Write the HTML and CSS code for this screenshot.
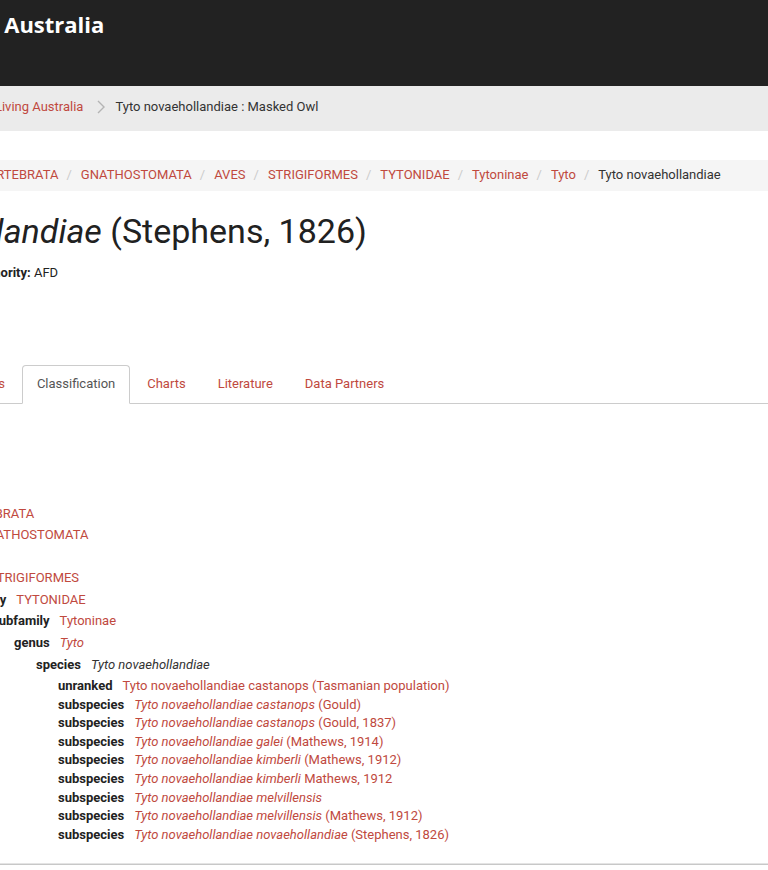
FILE: index.html
```html
<!DOCTYPE html>
<html lang="en">
<head>
<meta charset="utf-8">
<title>Tyto novaehollandiae : Masked Owl</title>
<link rel="stylesheet" href="styles.css">
</head>
<body>
<header class="site-header">
  <div class="brand">Atlas of Living Australia</div>
</header>
<nav class="crumb-bar">
  <ol class="crumbs">
    <li><a href="#">Atlas of Living Australia</a></li>
    <li class="chev" aria-hidden="true"><svg width="8" height="14" viewBox="0 0 8 14"><polyline points="1,1 7,7 1,13" fill="none" stroke="#b4b4b4" stroke-width="1.4"/></svg></li>
    <li class="current">Tyto novaehollandiae : Masked Owl</li>
  </ol>
</nav>
<main class="content">
  <div class="taxon-bar">
    <ol class="taxon-crumbs">
      <li><a href="#">ANIMALIA</a></li>
      <li><a href="#">CHORDATA</a></li>
      <li><a href="#">VERTEBRATA</a></li>
      <li><a href="#">GNATHOSTOMATA</a></li>
      <li><a href="#">AVES</a></li>
      <li><a href="#">STRIGIFORMES</a></li>
      <li><a href="#">TYTONIDAE</a></li>
      <li><a href="#">Tytoninae</a></li>
      <li><a href="#">Tyto</a></li>
      <li class="active">Tyto novaehollandiae</li>
    </ol>
  </div>
  <h1 class="title"><span class="sci">Tyto novaehollandiae</span> (Stephens, 1826)</h1>
  <p class="authority"><strong>Name authority:</strong> AFD</p>
  <ul class="tabs">
    <li><a href="#">Overview</a></li>
    <li><a href="#">Gallery</a></li>
    <li><a href="#">Names</a></li>
    <li class="active"><a href="#">Classification</a></li>
    <li><a href="#">Charts</a></li>
    <li><a href="#">Literature</a></li>
    <li><a href="#">Data Partners</a></li>
  </ul>
  <ul class="tree">
    <li><span class="rank">kingdom</span><a href="#">ANIMALIA</a>
    <ul><li><span class="rank">phylum</span><a href="#">CHORDATA</a>
    <ul><li><span class="rank">subphylum</span><a href="#">VERTEBRATA</a>
    <ul><li><span class="rank">superclass</span><a href="#">GNATHOSTOMATA</a>
    <ul><li><span class="rank">class</span><a href="#">AVES</a>
    <ul><li><span class="rank">order</span><a href="#">STRIGIFORMES</a>
    <ul><li><span class="rank">family</span><a href="#">TYTONIDAE</a>
    <ul><li><span class="rank">subfamily</span><a href="#">Tytoninae</a>
    <ul><li><span class="rank">genus</span><a href="#"><i>Tyto</i></a>
    <ul><li><span class="rank">species</span><i class="here">Tyto novaehollandiae</i>
      <ul>
        <li><span class="rank">unranked</span><a href="#">Tyto novaehollandiae castanops (Tasmanian population)</a></li>
        <li><span class="rank">subspecies</span><a href="#"><i>Tyto novaehollandiae castanops</i> (Gould)</a></li>
        <li><span class="rank">subspecies</span><a href="#"><i>Tyto novaehollandiae castanops</i> (Gould, 1837)</a></li>
        <li><span class="rank">subspecies</span><a href="#"><i>Tyto novaehollandiae galei</i> (Mathews, 1914)</a></li>
        <li><span class="rank">subspecies</span><a href="#"><i>Tyto novaehollandiae kimberli</i> (Mathews, 1912)</a></li>
        <li><span class="rank">subspecies</span><a href="#"><i>Tyto novaehollandiae kimberli</i> Mathews, 1912</a></li>
        <li><span class="rank">subspecies</span><a href="#"><i>Tyto novaehollandiae melvillensis</i></a></li>
        <li><span class="rank">subspecies</span><a href="#"><i>Tyto novaehollandiae melvillensis</i> (Mathews, 1912)</a></li>
        <li><span class="rank">subspecies</span><a href="#"><i>Tyto novaehollandiae novaehollandiae</i> (Stephens, 1826)</a></li>
      </ul>
    </li></ul>
    </li></ul>
    </li></ul>
    </li></ul>
    </li></ul>
    </li></ul>
    </li></ul>
    </li></ul>
    </li></ul>
    </li>
  </ul>
</main>
<footer class="site-footer"></footer>
</body>
</html>
```
FILE: styles.css
```css
html, body {
  margin: 0;
  padding: 0;
}
body {
  font-family: Roboto, "Liberation Sans", sans-serif;
  font-size: 13px;
  line-height: 1.42857;
  color: #333;
  background: #fff;
  overflow-x: hidden;
}
a {
  color: #c0493e;
  text-decoration: none;
}

/* header */
.site-header {
  background: #222;
  height: 86px;
}
.brand {
  font-family: "Open Sans", "Liberation Sans", sans-serif;
  font-weight: 700;
  font-size: 22px;
  line-height: 32px;
  color: #fff;
  padding-top: 8px;
  margin-left: -156px;
  white-space: nowrap;
}

/* page breadcrumb */
.crumb-bar {
  background: #ebebeb;
  padding: 12px 0 14px;
}
.crumbs {
  list-style: none;
  margin: 0 0 0 -53px;
  padding: 0;
  display: flex;
  align-items: center;
  white-space: nowrap;
}
.crumbs .chev {
  display: flex;
  margin: 0 10px 0 14px;
}
.crumbs .current {
  color: #333;
}

/* taxon breadcrumb */
.taxon-bar {
  background: #f5f5f5;
  margin-top: 29px;
  padding: 6px 0 7px;
}
.taxon-crumbs {
  list-style: none;
  margin: 0 0 0 -191px;
  padding: 0;
  display: flex;
  white-space: nowrap;
}
.taxon-crumbs li + li::before {
  content: "/";
  color: #ccc;
  padding: 0 9px 0 8px;
}
.taxon-crumbs .active {
  color: #333;
}

/* title */
.title {
  font-size: 34px;
  font-weight: 400;
  line-height: 37.4px;
  color: #212121;
  margin: 21.4px 0 0 -209px;
  white-space: nowrap;
}
.title .sci {
  font-style: italic;
}
.authority {
  margin: 14px 0 0 -63px;
  color: #222;
  white-space: nowrap;
}
.authority strong {
  font-weight: 700;
}

/* tabs */
.tabs {
  list-style: none;
  margin: 82.5px 0 0;
  padding: 0;
  display: flex;
  border-bottom: 1px solid #ccc;
  white-space: nowrap;
}
.tabs li {
  margin-bottom: -1px;
}
.tabs li:first-child {
  margin-left: -208px;
}
.tabs a {
  display: block;
  padding: 9px 14px 9px;
  margin-right: 2px;
  border: 1px solid transparent;
  border-radius: 4px 4px 0 0;
}
.tabs .active a {
  color: #555;
  background: #fff;
  border-color: #ccc #ccc transparent;
}

/* classification tree */
.tree,
.tree ul {
  list-style: none;
  margin: 0;
  padding: 0;
  white-space: nowrap;
}
.tree {
  margin: 58px 0 0 -162px;
  padding-bottom: 20px;
}
.tree ul {
  padding-left: 22px;
  margin-top: 3px;
}
.rank {
  font-weight: 700;
  color: #222;
  margin-right: 10px;
}
.here {
  color: #333;
}

/* footer rule */
.site-footer {
  border-top: 1px solid #c8c8c8;
  box-shadow: 0 -1px 0 #e4e4e4;
  height: 40px;
}
```
